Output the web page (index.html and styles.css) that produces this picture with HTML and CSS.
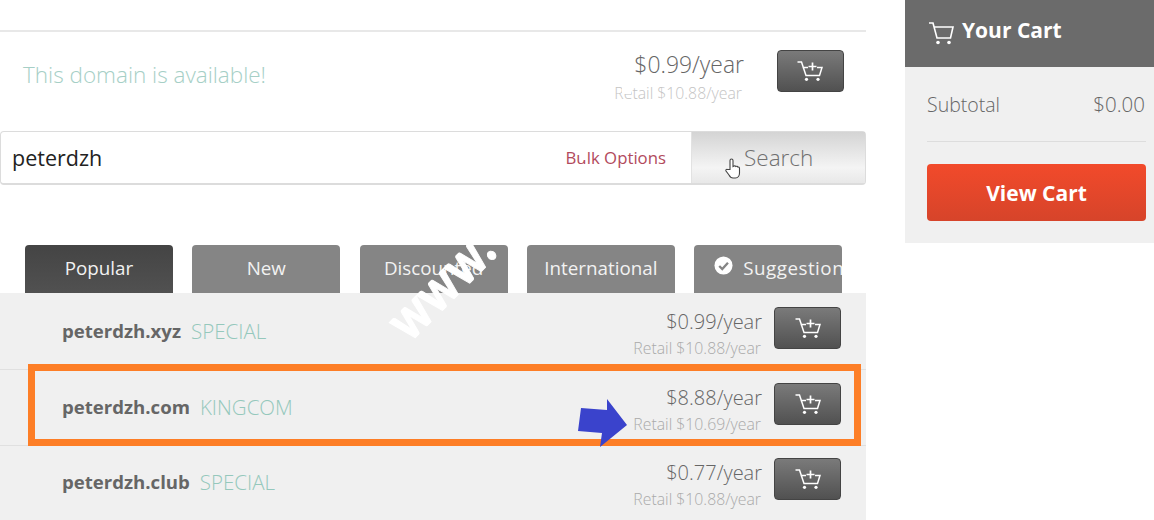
FILE: index.html
```html
<!DOCTYPE html>
<html lang="en">
<head>
    <meta charset="UTF-8">
    <title>Domain search</title>
    <link rel="stylesheet" href="styles.css">
</head>
<body>
    <svg class="icon-defs" width="0" height="0">
        <symbol id="cart-plus" viewBox="0 0 26 20">
            <path d="M0.500 1h4l4.500 13.500h13.500l2.500-8h-5M5.500 6.500h5.500" fill="none" stroke="currentColor" stroke-width="1.500"/>
            <path d="M15.500 1.500v8M11.500 5.500h8" fill="none" stroke="currentColor" stroke-width="1.700"/>
            <circle cx="9.500" cy="18.300" r="1.600" fill="currentColor"/>
            <circle cx="21" cy="18.300" r="1.600" fill="currentColor"/>
        </symbol>
    </svg>

    <div class="page">
        <main class="main">
            <div class="available">
                <p class="available-text">This domain is available!</p>
                <div class="price-block">
                    <div class="price price-top">$0.99/year</div>
                    <div class="retail retail-top">Retail $10.88/year</div>
                </div>
                <button class="add-btn"><svg class="cart-icon"><use href="#cart-plus"/></svg></button>
            </div>

            <div class="search">
                <div class="search-input">
                    <span class="search-value">peterdzh</span>
                    <a class="bulk-link">Bulk Options</a>
                </div>
                <button class="search-btn">Search</button>
            </div>

            <div class="tabs">
                <div class="tab active">Popular</div>
                <div class="tab">New</div>
                <div class="tab">Discounted</div>
                <div class="tab">International</div>
                <div class="tab tab-suggest">
                    <svg class="check-icon" viewBox="0 0 20 20">
                        <circle cx="10" cy="10" r="9.500" fill="#fff"/>
                        <path d="M5.500 10.500l3.200 3.200 6-6.700" fill="none" stroke="#858585" stroke-width="2.400"/>
                    </svg>
                    <span>Suggestions</span>
                </div>
            </div>

            <div class="results">
                <div class="row">
                    <span class="domain">peterdzh.xyz</span>
                    <span class="promo">SPECIAL</span>
                    <div class="price-block">
                        <div class="price">$0.99/year</div>
                        <div class="retail">Retail $10.88/year</div>
                    </div>
                    <button class="add-btn"><svg class="cart-icon"><use href="#cart-plus"/></svg></button>
                </div>
                <div class="row">
                    <span class="domain">peterdzh.com</span>
                    <span class="promo">KINGCOM</span>
                    <div class="price-block">
                        <div class="price">$8.88/year</div>
                        <div class="retail">Retail $10.69/year</div>
                    </div>
                    <button class="add-btn"><svg class="cart-icon"><use href="#cart-plus"/></svg></button>
                </div>
                <div class="row">
                    <span class="domain">peterdzh.club</span>
                    <span class="promo">SPECIAL</span>
                    <div class="price-block">
                        <div class="price">$0.77/year</div>
                        <div class="retail">Retail $10.88/year</div>
                    </div>
                    <button class="add-btn"><svg class="cart-icon"><use href="#cart-plus"/></svg></button>
                </div>
            </div>
        </main>

        <aside class="cart">
            <div class="cart-head">
                <svg class="cart-head-icon" viewBox="0 0 26 24">
                    <path d="M1 2h4l4 15h13.500l2.500-11h-19" fill="none" stroke="#fff" stroke-width="1.600"/>
                    <circle cx="10" cy="21.500" r="1.800" fill="#fff"/>
                    <circle cx="21" cy="21.500" r="1.800" fill="#fff"/>
                </svg>
                <span>Your Cart</span>
            </div>
            <div class="cart-body">
                <div class="subtotal">
                    <span>Subtotal</span>
                    <span class="subtotal-amount">$0.00</span>
                </div>
                <button class="view-cart">View Cart</button>
            </div>
        </aside>
    </div>

    <!-- things drawn on top of the video frame -->
    <div class="highlight"></div>
    <svg class="arrow" viewBox="0 0 50 48">
        <path d="M3 9L29 11V0L49 26L22 48L24 34L0 32Z" fill="#3a43cc"/>
    </svg>
    <svg class="hand" viewBox="0 0 16 22">
        <path d="M5 12V3a1.500 1.500 0 0 1 3 0v6l1-.5c1-.3 1.500 0 1.800.5 1-.5 1.700-.2 2 .5 1-.2 1.700.3 1.700 1.500v4.500c0 2.500-1.500 5-4 5H8c-2 0-3-1-4-3l-3-4c-.5-1 .5-2 1.500-1.500z" fill="#fff" stroke="#444" stroke-width="1.100"/>
    </svg>
    <div class="watermark">www.</div>
    <span class="speck speck-retail"></span>
    <span class="speck speck-bulk"></span>
</body>
</html>
```

FILE: styles.css
```css
* {
    box-sizing: border-box;
}

html, body {
    height: 520px;
    overflow: hidden;
}

body {
    margin: 0;
    position: relative;
    background: #fff;
    font-family: "Open Sans", "Lato", sans-serif;
    color: #666;
}

.icon-defs {
    position: absolute;
}

.page {
    display: flex;
    align-items: flex-start;
}

.main {
    width: 866px;
    padding-top: 30px;
}

/* available banner */
.available {
    display: flex;
    align-items: flex-start;
    height: 101px;
    padding-top: 17px;
    padding-right: 22px;
    border-top: 2px solid #e8e8e8;
}

.available-text {
    margin: 12px auto 0 23px;
    font-size: 22.500px;
    font-weight: 300;
    line-height: 28px;
    color: #a6cfc6;
}

.price-block {
    text-align: right;
    margin-left: auto;
    margin-right: 12px;
}

.available .price-block {
    margin-right: 33px;
}

.price {
    margin-top: 1px;
    font-size: 20px;
    font-weight: 300;
    line-height: 28px;
    color: #666;
}

.price-top {
    margin-top: 2px;
    font-size: 22.900px;
}

.retail {
    margin-top: 1px;
    padding-right: 1px;
    font-size: 15.800px;
    font-weight: 300;
    line-height: 22px;
    color: #aaa;
}

.retail-top {
    margin-top: 3px;
    padding-right: 2px;
    color: #c4c4c4;
}

.add-btn {
    width: 67px;
    height: 42px;
    padding: 0;
    display: flex;
    align-items: center;
    justify-content: center;
    border: 1px solid #444;
    border-radius: 4px;
    background: linear-gradient(#7a7a7a, #515151);
    color: #fff;
}

.available .add-btn {
    margin-top: 1px;
}

.cart-icon {
    width: 26px;
    height: 20px;
}

/* search bar */
.search {
    display: flex;
    height: 54px;
    border: 1px solid #dcdcdc;
    border-bottom-width: 2px;
    border-radius: 4px;
}

.search-input {
    width: 691px;
    display: flex;
    align-items: center;
    justify-content: space-between;
    padding: 0 25px 0 11px;
    border-right: 1px solid #e2e2e2;
}

.search-value {
    font-size: 21.500px;
    font-weight: 400;
    color: #222;
}

.bulk-link {
    font-size: 16.800px;
    font-weight: 400;
    color: #b24a5c;
}

.search-btn {
    flex: 1;
    padding: 0 0 0 52px;
    border: 0;
    text-align: left;
    background: linear-gradient(#d4d4d4, #f4f4f4 70%, #e8e8e8);
    font-family: inherit;
    font-size: 22.500px;
    font-weight: 300;
    color: #707070;
}

/* tabs */
.tabs {
    display: flex;
    gap: 19.300px;
    margin-top: 60px;
    padding-left: 25px;
}

.tab {
    width: 148px;
    height: 48px;
    display: flex;
    align-items: center;
    justify-content: center;
    padding-bottom: 3px;
    border-radius: 4px 4px 0 0;
    background: #858585;
    font-size: 18.800px;
    font-weight: 400;
    color: #f2f2f2;
    white-space: nowrap;
    overflow: hidden;
}

.tab.active {
    background: linear-gradient(#444, #515151);
}

.tab-suggest {
    justify-content: flex-start;
    padding-left: 20px;
    gap: 10px;
    letter-spacing: 0.500px;
}

.check-icon {
    width: 19px;
    height: 19px;
    flex: none;
    margin-top: -4px;
}

/* result rows */
.results {
    padding-top: 1px;
    background: #f0f0f0;
}

.row {
    display: flex;
    align-items: flex-start;
    height: 76px;
    padding: 13px 25px 0 62px;
    border-bottom: 1px solid #e0e0e0;
}

.row:last-child {
    padding-top: 12px;
}

.domain {
    margin-top: 10px;
    font-size: 18.600px;
    font-weight: 700;
    line-height: 28px;
    color: #666;
}

.promo {
    margin: 10px 0 0 10px;
    font-size: 20.500px;
    font-weight: 300;
    line-height: 28px;
    color: #95c8bc;
}

/* cart */
.cart {
    width: 249px;
    height: 243px;
    margin-left: 39px;
    background: #f0f0f0;
}

.cart-head {
    height: 67px;
    display: flex;
    align-items: center;
    gap: 8px;
    padding: 0 0 8px 23px;
    background: #6b6b6b;
    font-size: 21px;
    font-weight: 700;
    color: #fff;
}

.cart-head-icon {
    width: 26px;
    height: 24px;
    margin-top: 6px;
}

.cart-body {
    padding: 0 8px 0 22px;
}

.subtotal {
    display: flex;
    justify-content: space-between;
    align-items: center;
    height: 75px;
    border-bottom: 1px solid #ddd;
    font-size: 19.500px;
    font-weight: 300;
    color: #666;
}

.subtotal-amount {
    margin-right: 1px;
    font-size: 20.500px;
}

.view-cart {
    display: block;
    width: 219px;
    height: 57px;
    margin-top: 22px;
    padding: 0;
    border: 0;
    border-radius: 4px;
    background: linear-gradient(#f24a2b, #d6442a);
    font-family: inherit;
    font-size: 21px;
    font-weight: 700;
    color: #fff;
}

/* overlays */
.highlight {
    position: absolute;
    left: 28px;
    top: 364px;
    width: 833px;
    height: 82px;
    border: 7px solid #fd7e26;
}

.arrow {
    position: absolute;
    left: 578px;
    top: 399px;
    width: 50px;
    height: 48px;
}

.hand {
    position: absolute;
    left: 725px;
    top: 157px;
    width: 16px;
    height: 23px;
}

.watermark {
    position: absolute;
    left: 365px;
    top: 254px;
    font-family: "Lato", sans-serif;
    font-size: 56px;
    font-weight: 900;
    line-height: 60px;
    color: #fff;
    -webkit-text-stroke: 1px #fff;
    transform: rotate(-45deg) scaleX(0.85);
}

.speck {
    position: absolute;
    background: #fff;
}

.speck-retail {
    left: 622px;
    top: 87px;
    width: 9px;
    height: 7px;
}

.speck-bulk {
    left: 583px;
    top: 151px;
    width: 3px;
    height: 9px;
}
```
